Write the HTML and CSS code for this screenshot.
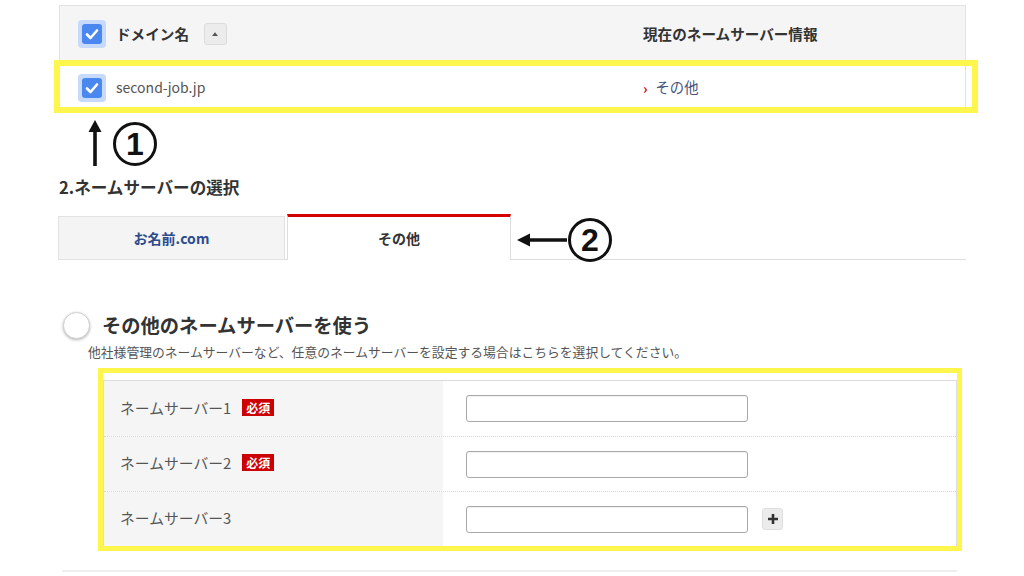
FILE: index.html
```html
<!DOCTYPE html>
<html lang="ja">
<head>
<meta charset="utf-8">
<title>ネームサーバーの選択</title>
<link rel="stylesheet" href="styles.css">
</head>
<body>
<div class="page">
  <section class="domain-table">
    <div class="dt-row dt-head">
      <div class="dt-cell dt-name">
        <span class="cb"><span class="cb-box"><svg viewBox="0 0 20 20" width="20" height="20"><path d="M5 10.5 L8.5 14 L15 6.5" fill="none" stroke="#fff" stroke-width="2.6" stroke-linecap="round" stroke-linejoin="round"/></svg></span></span>
        <span class="dt-label">ドメイン名</span>
        <span class="sort"><svg viewBox="0 0 8 5" width="6" height="4"><path d="M0 5 L4 0 L8 5 Z" fill="#555"/></svg></span>
      </div>
      <div class="dt-cell dt-label">現在のネームサーバー情報</div>
    </div>
    <div class="dt-row dt-body">
      <div class="dt-cell dt-name">
        <span class="cb"><span class="cb-box"><svg viewBox="0 0 20 20" width="20" height="20"><path d="M5 10.5 L8.5 14 L15 6.5" fill="none" stroke="#fff" stroke-width="2.6" stroke-linecap="round" stroke-linejoin="round"/></svg></span></span>
        <span class="domain">second-job.jp</span>
      </div>
      <div class="dt-cell"><span class="chev">›</span><span class="ns-link">その他</span></div>
    </div>
  </section>

  <h2 class="sec-title">2.ネームサーバーの選択</h2>

  <div class="tabs">
    <div class="tab">お名前.com</div>
    <div class="tab tab-active">その他</div>
  </div>

  <section class="option">
    <div class="option-head">
      <span class="radio"></span>
      <h3 class="option-title">その他のネームサーバーを使う</h3>
    </div>
    <p class="option-desc">他社様管理のネームサーバーなど、任意のネームサーバーを設定する場合はこちらを選択してください。</p>

    <div class="ns-table">
      <div class="ns-row">
        <div class="ns-label">ネームサーバー1<span class="req">必須</span></div>
        <div class="ns-field"><span class="input"></span></div>
      </div>
      <div class="ns-row">
        <div class="ns-label">ネームサーバー2<span class="req">必須</span></div>
        <div class="ns-field"><span class="input"></span></div>
      </div>
      <div class="ns-row">
        <div class="ns-label">ネームサーバー3</div>
        <div class="ns-field"><span class="input"></span><span class="plus"><svg viewBox="0 0 12 12" width="12" height="12"><path d="M6 1 V11 M1 6 H11" stroke="#333" stroke-width="2.6"/></svg></span></div>
      </div>
    </div>
  </section>
  <div class="divider"></div>
</div>

<div class="hl hl-1"></div>
<div class="hl hl-2"></div>
<svg class="arrow-up" viewBox="0 0 20 48" width="20" height="48"><path d="M10 10 V47" stroke="#111" stroke-width="3.6"/><path d="M3.5 13 L10 1 L16.5 13 Z" fill="#111"/></svg>
<div class="num num-1">1</div>
<svg class="arrow-left" viewBox="0 0 50 20" width="50" height="20"><path d="M10 10 H50" stroke="#111" stroke-width="3.6"/><path d="M0 10 L13 3.5 L13 16.5 Z" fill="#111"/></svg>
<div class="num num-2">2</div>
</body>
</html>
```

FILE: styles.css
```css
* { box-sizing: border-box; }
html, body { margin: 0; padding: 0; background: #fff; }
body {
  position: relative;
  width: 1024px;
  height: 576px;
  overflow: hidden;
  font-family: "Noto Sans CJK JP", "Noto Sans", sans-serif;
  color: #333;
}
.page {
  width: 907px;
  margin-left: 59px;
  padding-top: 5px;
}

/* domain table */
.domain-table {
  border: 1px solid #e2e2e2;
  border-bottom: none;
}
.dt-row {
  display: grid;
  grid-template-columns: 583px 1fr;
  align-items: center;
}
.dt-head { height: 56px; background: #f5f5f5; border-bottom: 1px solid #e2e2e2; }
.dt-body { height: 51px; background: #fff; }
.dt-cell { display: flex; align-items: center; }
.dt-name { padding-left: 18px; }
.dt-label { font-size: 14.6px; font-weight: bold; color: #333; }
.cb {
  width: 28px; height: 28px;
  border-radius: 4px;
  background: #c7dafb;
  display: flex; align-items: center; justify-content: center;
  margin-right: 10px;
}
.cb-box {
  width: 20px; height: 20px;
  border-radius: 3px;
  background: #4a88ef;
  display: flex;
}
.sort {
  width: 23px; height: 22px;
  margin-left: 15px;
  background: #ececec;
  border: 1px solid #dcdcdc;
  border-radius: 3px;
  display: flex; align-items: center; justify-content: center;
}
.domain { font-size: 14px; color: #555; margin-top: -2px; }
.chev { color: #d0021b; font-size: 14px; font-weight: bold; margin-right: 8px; line-height: 1; }
.ns-link { font-size: 14.3px; color: #44557d; margin-top: -2px; }

/* section title */
.sec-title {
  margin: 64px 0 0;
  font-size: 16.6px;
  line-height: 20px;
  font-weight: bold;
  color: #333;
}

/* tabs */
.tabs {
  display: flex;
  align-items: flex-end;
  height: 45px;
  margin-top: 18px;
  border-bottom: 1px solid #ddd;
}
.tab {
  width: 227px;
  height: 44px;
  margin-bottom: -1px;
  margin-left: -1px;
  background: #f4f4f4;
  border: 1px solid #e2e2e2;
  display: flex; align-items: center; justify-content: center;
  font-size: 14px; font-weight: bold; color: #2d4c8c;
}
.tab-active {
  width: 224px;
  height: 46px;
  margin-left: 2px;
  background: #fff;
  border-top: 3px solid #d40000;
  border-bottom: none;
  border-left: 1px solid #ddd;
  border-right: 1px solid #ddd;
  color: #333;
  padding-bottom: 2px;
}

/* option */
.option { margin-top: 51px; }
.option-head { display: flex; align-items: center; height: 28px; padding-left: 4px; }
.radio {
  width: 27px; height: 27px;
  border-radius: 50%;
  background: #fff;
  border: 1px solid #d0d0d0;
  box-shadow: 0 1px 3px rgba(0,0,0,.3);
  margin-right: 12px;
}
.option-title { margin: 0; font-size: 19.3px; font-weight: bold; color: #333; line-height: 28px; }
.option-desc {
  margin: 4px 0 0 29px;
  font-size: 12.8px;
  line-height: 18px;
  color: #555;
}

.ns-table {
  margin: 19px 0 0 44px;
  width: 854px;
  border: 1px solid #dcdcdc;
}
.ns-row {
  display: grid;
  grid-template-columns: 339px 1fr;
  height: 55px;
  border-top: 1px dotted #d6d6d6;
}
.ns-row:first-child { border-top: none; height: 55px; }
.ns-label {
  background: #f5f5f5;
  padding-left: 16px;
  display: flex; align-items: center;
  font-size: 14.8px; color: #555;
  padding-bottom: 3px;
}
.req {
  margin-left: 11px;
  background: #cc0000;
  color: #fff;
  font-size: 12px;
  font-weight: bold;
  line-height: 17px;
  padding: 0 4px;
}
.ns-field { display: flex; align-items: center; padding-left: 23px; }
.input {
  width: 282px; height: 27px;
  border: 1px solid #a8a8a8;
  border-radius: 3px;
  background: #fff;
  box-shadow: inset 0 1px 1px rgba(0,0,0,.06);
}
.plus {
  width: 21px; height: 22px;
  margin-left: 14px;
  background: #ececec;
  border: 1px solid #dedede;
  border-radius: 3px;
  display: flex; align-items: center; justify-content: center;
}

.divider {
  margin: 23px 0 0 3px;
  width: 895px;
  height: 2px;
  background: #eeeeee;
}

/* annotations */
.hl { position: absolute; border: 6px solid #fff64d; }
.hl-1 { left: 54px; top: 60px; width: 924px; height: 53px; }
.hl-2 { left: 98px; top: 368px; width: 864px; height: 183px; border-width: 5px; }
.arrow-up { position: absolute; left: 85px; top: 119px; }
.arrow-left { position: absolute; left: 517px; top: 230px; }
.num {
  position: absolute;
  width: 44px; height: 44px;
  border: 3.5px solid #111;
  border-radius: 50%;
  display: flex; align-items: center; justify-content: center;
  font-family: "Liberation Sans", Arial, sans-serif;
  font-weight: bold;
  font-size: 32px;
  color: #111;
  line-height: 1;
}
.num-1 { left: 113px; top: 122px; }
.num-2 { left: 568px; top: 218px; }
```
